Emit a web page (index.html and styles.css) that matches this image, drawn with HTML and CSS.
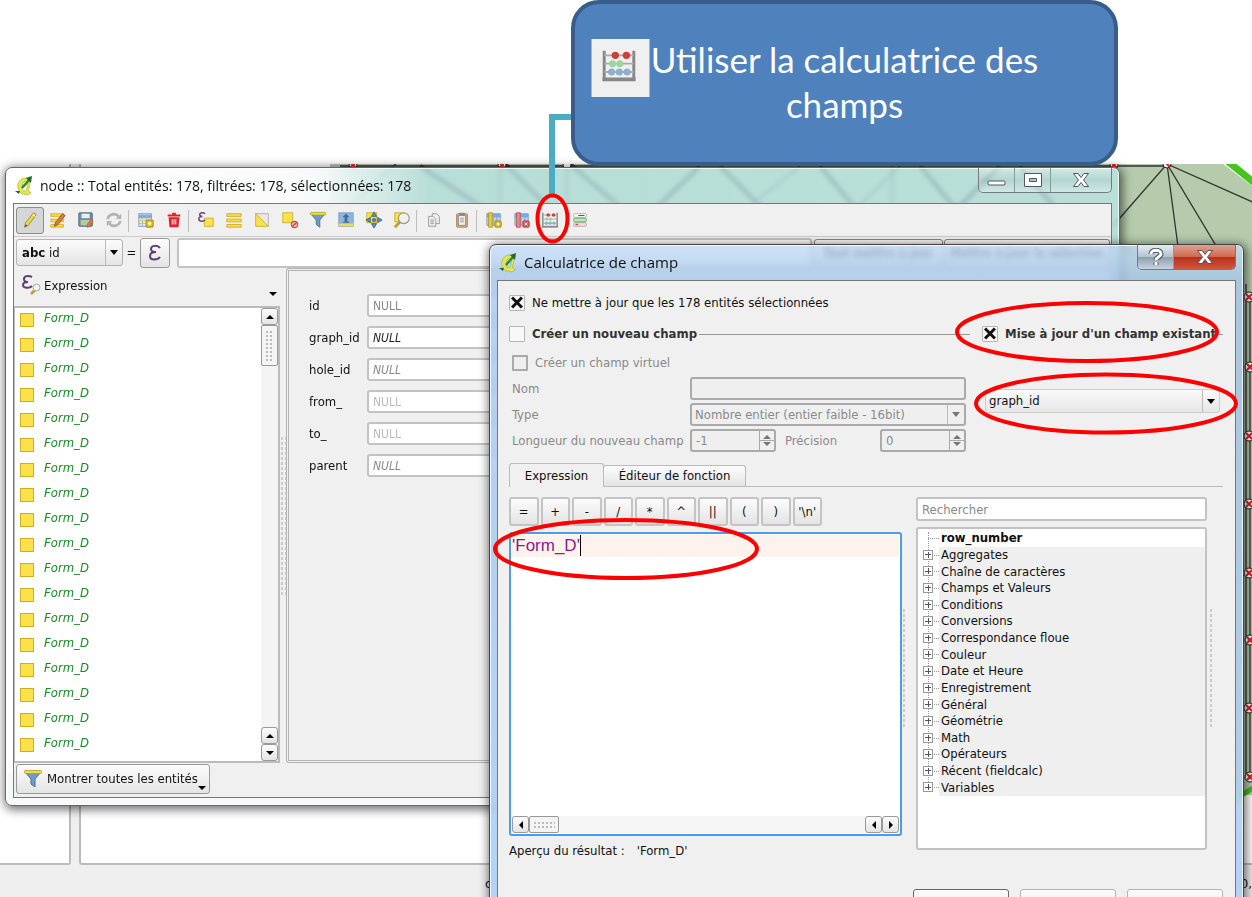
FILE: index.html
```html
<!DOCTYPE html>
<html lang="fr">
<head>
<meta charset="utf-8">
<title>Calculatrice de champ</title>
<link rel="stylesheet" href="styles.css">
</head>
<body>
<svg width="0" height="0" class="defs" aria-hidden="true">
  <defs>
    <symbol id="abacus" viewBox="0 0 20 20">
      <path d="M2 2v15M18 2v15" stroke="#888" stroke-width="1.6"/>
      <path d="M2 4.500h16M2 9h16M2 13.500h16" stroke="#aaa" stroke-width="1"/>
      <path d="M1 17.500h18" stroke="#888" stroke-width="2"/>
      <g fill="#d23c3c"><circle cx="8" cy="4.500" r="2"/><circle cx="14" cy="4.500" r="2"/></g>
      <g fill="#9bd69b"><circle cx="6.500" cy="9" r="1.900"/><circle cx="10.500" cy="9" r="1.900"/></g>
      <g fill="#8fb0cd"><circle cx="6" cy="13.500" r="1.900"/><circle cx="10.200" cy="13.500" r="1.900"/><circle cx="14.400" cy="13.500" r="1.900"/></g>
    </symbol>
    <symbol id="qgis" viewBox="0 0 20 20">
      <path d="M12 2C6 2 3 7 4 12c1 4 3 6 6 6l4 1 3-2-3-3c3-4 2-12-2-12zM11 5c3 0 3 6 1 9-2 2-4 1-4-2 0-3 1-6 3-7z" fill="#e2e852" stroke="#a9b52c" stroke-width=".7"/>
      <path d="M8 12 15 4" stroke="#2f8a35" stroke-width="2.500"/>
      <path d="M12 2l6-2-1 7zM1 15h5l-1 3z" fill="#1e6a28"/>
    </symbol>
    <symbol id="funnel" viewBox="0 0 20 20">
      <path d="M2 3h16l-6 7v8l-4-3v-5z" fill="#6f9bc8" stroke="#4d7096"/>
      <rect x="1.500" y="1.500" width="17" height="3" rx="1" fill="#f0dc3c" stroke="#a99a3a" stroke-width=".8"/>
    </symbol>
    <symbol id="table" viewBox="0 0 20 20">
      <rect x="2" y="3" width="14" height="14" fill="#e6eef6" stroke="#7f9fc0"/>
      <path d="M2 4h14v4H2z" fill="#7fa9d6"/><path d="M2 11h14M2 14h14M6 3v14M11 3v14" stroke="#9fb7d0"/>
    </symbol>
    <symbol id="columns" viewBox="0 0 20 20">
      <path d="M2 3h15v13H2z" fill="#b9d0ea" stroke="#7fa6d6"/><path d="M2 3h15v4H2z" fill="#7fa9dc"/>
      <path d="M9 7v9M13 7v9" stroke="#7fa6d6"/>
    </symbol>
  </defs>
</svg>

<main class="desktop">
  <svg class="map" aria-hidden="true">
    <rect x="330" width="922" height="631" fill="#b5cbab"/>
    <path d="M1218-4 1260 28V-4z" fill="#fff"/>
    <path d="M1226-4 1262 25" stroke="#46c41f" stroke-width="7"/>
    <path d="M1228 640 1256 622" stroke="#3cc01e" stroke-width="5"/>
    <path d="M1167 0 1112 63M1167 0l12 90M1167 0l60 100M1167 0l90 40M340 2h830M1112 75l24 16M330 60 400-4M420 2l90 60M500 2v60M505 0l50 50M567 0v50M570 0l70 60M700 2 650 50M720 2l60 60M800 2 740 50M820 2l50 60M900 2 850 50M892 0v50M920 2l50 60M1000 2l-50 50M1020 2l50 60M1246 120v490M1250 130v480" fill="none" stroke="#333" stroke-width="1.300"/>
    <path d="M420 2l90 60M505 0l50 50M570 0l70 60M700 2 650 50M720 2l60 60M820 2l50 60M920 2l50 60M1000 2l-50 50M1020 2l50 60" fill="none" stroke="#333" stroke-width="4"/>
    <g fill="#fff" stroke="#222"><circle cx="353" cy="1" r="4"/><circle cx="502" cy="1" r="4"/><circle cx="567" cy="1" r="4"/><circle cx="1114" cy="1" r="4"/><circle cx="1167" cy="0" r="4"/><circle cx="1249" cy="133" r="5"/><circle cx="1250" cy="203" r="5"/><circle cx="1249" cy="272" r="5"/><circle cx="1249" cy="340" r="5"/><circle cx="1249" cy="409" r="5"/><circle cx="1250" cy="476" r="5"/><circle cx="1249" cy="544" r="5"/><circle cx="1250" cy="613" r="5"/></g>
    <path d="M350-2l6 6m0-6-6 6M499-2l6 6m0-6-6 6M1111-2l6 6m0-6-6 6M1164-3l6 6M1246 130l6 6m0-6-6 6M1247 200l6 6m0-6-6 6M1246 269l6 6m0-6-6 6M1246 337l6 6m0-6-6 6M1246 406l6 6m0-6-6 6M1247 473l6 6m0-6-6 6M1246 541l6 6m0-6-6 6M1247 610l6 6m0-6-6 6" stroke="#e02020" stroke-width="2"/>
  </svg>
  <div class="back">
    <div class="back-panels"><div class="back-side"></div><div class="back-main"></div></div>
    <div class="status"><span>c</span><span>0,</span></div>
  </div>

  <section class="window node" aria-label="Table d'attributs">
    <header class="title">
      <svg class="i20"><use href="#qgis"/></svg>
      <h1>node :: Total entités: 178, filtrées: 178, sélectionnées: 178</h1>
      <div class="caption">
        <button aria-label="Réduire"><svg width="20" height="14"><rect x="1" y="8" width="17" height="4" rx="1" fill="#fff" stroke="#556"/></svg></button>
        <button aria-label="Agrandir"><svg width="20" height="16"><path d="M1.500 1.500h17v13h-17zM6.500 6.500v3h7v-3z" fill="#fff" fill-rule="evenodd" stroke="#556"/></svg></button>
        <button class="wide" aria-label="Fermer"><svg width="18" height="16"><path d="M1.500 1.500h4.500l3 4 3-4h4.500l-5 6.500 5 6.500h-4.500l-3-4-3 4h-4.500l5-6.500z" fill="#fff" stroke="#556"/></svg></button>
      </div>
    </header>
    <div class="client">
      <div class="toolbar">
        <button class="on" aria-label="Éditer"><svg viewBox="0 0 20 20"><path d="M4 18l1-5L14 2l3 2L8 16z" fill="#e7d94e" stroke="#93893c"/><path d="M13 4l3 2" stroke="#fff"/><path d="M4 18l1-3 2 1z" fill="#444"/></svg></button>
        <button aria-label="Multiédition"><svg viewBox="0 0 20 20"><path d="M2 3h14v3H2zM2 9h14v3H2zM2 15h14v3H2z" fill="#f7dc3d" stroke="#c9aa20" stroke-width=".8"/><path d="M6 17l1-4 8-10 3 2-8 10z" fill="#df7a3c" stroke="#8f532b"/></svg></button>
        <button aria-label="Enregistrer"><svg viewBox="0 0 20 20"><rect x="2" y="2" width="15" height="15" rx="1" fill="#6e8ba8" stroke="#536a80"/><path d="M5 3h9v5H5z" fill="#e8eef2"/><path d="M4 10h11v6H4z" fill="#b9c9a5"/><path d="M11 18l1-4 4-5 2 2-4 6z" fill="#e77838" stroke="#a65426" stroke-width=".7"/></svg></button>
        <button aria-label="Recharger"><svg viewBox="0 0 20 20" fill="none" stroke="#b3b3b3" stroke-width="3"><path d="M3 9c1-6 9-7 12-3M17 11c-1 6-9 7-12 3"/><path d="M18 3v6h-6zM2 17v-6h6z" fill="#b3b3b3" stroke="none"/></svg></button>
        <i></i>
        <button aria-label="Ajouter une entité"><svg viewBox="0 0 20 20"><use href="#table"/><path d="M2 9h14v2H2z" fill="#f5dd4c"/><rect x="10" y="10" width="8" height="8" rx="1" fill="#d9b82e" stroke="#a9891b"/><circle cx="14" cy="14" r="2" fill="#fff6c0"/></svg></button>
        <button aria-label="Supprimer"><svg viewBox="0 0 20 20"><path d="M4 7h12l-1 11H5zM3 4h14v2H3zM8 2h4v2H8z" fill="#e0202c"/><path d="M8 9v6M10 9v6M12 9v6" stroke="#fff" stroke-width="1"/></svg></button>
        <i></i>
        <button aria-label="Sélectionner par expression"><svg viewBox="0 0 20 20"><rect x="8" y="8" width="10" height="9" fill="#fbe14a" stroke="#cfae2a"/><path d="M9 3C6 1 3 2 3 4c0 1 1 2 3 2-3 0-4 1-4 3 0 3 5 3 7 1" fill="none" stroke="#6a4778" stroke-width="1.700"/></svg></button>
        <button aria-label="Tout sélectionner"><svg viewBox="0 0 20 20"><path d="M2 3h16v3H2zM2 9h16v3H2zM2 15h16v3H2z" fill="#f9df45" stroke="#d0ae28"/></svg></button>
        <button aria-label="Inverser la sélection"><svg viewBox="0 0 20 20"><path d="M3 3h14v14z" fill="#e9e9e9" stroke="#aaa"/><path d="M3 3v14h14z" fill="#fbe14a" stroke="#cfae2a"/></svg></button>
        <button aria-label="Désélectionner"><svg viewBox="0 0 20 20"><rect x="2" y="2" width="11" height="11" fill="#fbe14a" stroke="#cfae2a"/><circle cx="15" cy="15" r="3.500" fill="#f5b0b0" stroke="#d94646" stroke-width="1.200"/><path d="M12.500 17.500l5-5" stroke="#d94646" stroke-width="1.500"/></svg></button>
        <button aria-label="Filtrer"><svg><use href="#funnel"/></svg></button>
        <button aria-label="Déplacer en haut"><svg viewBox="0 0 20 20"><rect x="2" y="2" width="16" height="15" fill="#8db5dd" stroke="#7fa3c6"/><path d="M2 14h16v3H2z" fill="#f1dc55"/><path d="M10 3l4 4h-2.500v5h2v1h-7v-1h2V7H6z" fill="#416b97"/></svg></button>
        <button aria-label="Centrer la carte"><svg viewBox="0 0 20 20"><rect x="2" y="2" width="11" height="11" fill="#fbe14a" stroke="#cfae2a"/><path d="M10 1l3 5H7zM10 19l3-5H7zM1 10l5-3v6zM19 10l-5-3v6zM8.500 8.500h3v3h-3z" fill="#5f8cbb" stroke="#34587c" stroke-width=".8"/></svg></button>
        <button aria-label="Zoomer"><svg viewBox="0 0 20 20"><rect x="2" y="2" width="10" height="10" fill="#fbe14a" stroke="#cfae2a"/><path d="M8 12l-6 6" stroke="#c29a2d" stroke-width="3"/><circle cx="12" cy="8" r="6" fill="#f1f1ea" stroke="#989898" stroke-width="1.300"/></svg></button>
        <i></i>
        <button aria-label="Copier"><svg viewBox="0 0 20 20" fill="#eee" stroke="#999"><path d="M8 3h5l3 3v8H8z"/><path d="M4 6h5l3 3v8H4z"/><path d="M6 10h4M6 12h4M6 14h4"/></svg></button>
        <button aria-label="Coller"><svg viewBox="0 0 20 20"><rect x="4" y="3" width="12" height="15" rx="1" fill="#d4b07b" stroke="#a98552"/><path d="M6 5h8v11H6z" fill="#eee" stroke="#888"/><path d="M7 2h6v3H7z" fill="#888"/><path d="M8 8h4M8 10h4M8 12h4" stroke="#999"/></svg></button>
        <i></i>
        <button aria-label="Nouveau champ"><svg viewBox="0 0 20 20"><use href="#columns"/><rect x="4" y="2" width="4" height="16" fill="#e9c83a" stroke="#b99a22"/><rect x="11" y="11" width="7" height="7" rx="1" fill="#d9b82e" stroke="#a9891b"/><circle cx="14.500" cy="14.500" r="1.500" fill="#fff"/></svg></button>
        <button aria-label="Supprimer le champ"><svg viewBox="0 0 20 20"><use href="#columns"/><rect x="4" y="2" width="4" height="16" fill="#e58a8a" stroke="#c45353"/><rect x="11" y="11" width="7" height="7" rx="1" fill="#dc5a5a" stroke="#bb3d3d"/><path d="M13 13l3 3m0-3-3 3" stroke="#fff"/></svg></button>
        <button aria-label="Calculatrice de champ"><svg><use href="#abacus"/></svg></button>
        <button aria-label="Mise en forme"><svg viewBox="0 0 20 20"><g fill="#fff" stroke="#aaa"><rect x="3" y="3" width="14" height="4" rx="1"/><rect x="3" y="13" width="14" height="4" rx="1" fill="#fbdede"/></g><rect x="3" y="8" width="14" height="4" rx="1" fill="#bfe6bf" stroke="#5cab5c"/><path d="M8 5h7" stroke="#444"/><path d="M5 15h3" stroke="#e04040" stroke-width="1.500"/></svg></button>
      </div>
      <div class="editrow">
        <button class="combo"><b>abc</b>&nbsp;id<span class="drop"></span></button>
        <span>=</span>
        <button class="eps" aria-label="Expression"><svg width="16" height="18" viewBox="0 0 16 18"><path d="M13 4C11 1 4 1 4 5c0 2 2 3 5 3-4 0-6 1-6 4 0 5 8 4 10 1" fill="none" stroke="#5f3f73" stroke-width="2"/></svg></button>
        <input class="grow" aria-label="Valeur">
        <button class="push w1">Tout mettre à jour</button>
        <button class="push w2">Mettre à jour la sélection</button>
      </div>
      <div class="panes">
        <div class="listpane">
          <button class="exprhead"><svg width="22" height="22" viewBox="0 0 22 22"><path d="M11 3C7 1 3 2 3 5c0 2 1 3 4 3-3 0-5 1-5 3 0 3 6 4 9 1" fill="none" stroke="#5f3f73" stroke-width="2"/><path d="M14 16l-4 4" stroke="#c29a2d" stroke-width="2.500"/><circle cx="15.500" cy="13.500" r="3.500" fill="#f4f4f4" stroke="#aaa"/></svg><span>Expression</span><i class="tri"></i></button>
          <div class="listbox">
            <ul class="list">
              <li>Form_D</li><li>Form_D</li><li>Form_D</li><li>Form_D</li><li>Form_D</li><li>Form_D</li><li>Form_D</li><li>Form_D</li><li>Form_D</li><li>Form_D</li><li>Form_D</li><li>Form_D</li><li>Form_D</li><li>Form_D</li><li>Form_D</li><li>Form_D</li><li>Form_D</li><li>Form_D</li>
            </ul>
            <div class="vscroll"><button aria-label="Haut"><i class="tri up"></i></button><div class="thumb"></div><span></span><button aria-label="Monter"><i class="tri up"></i></button><button aria-label="Descendre"><i class="tri"></i></button></div>
          </div>
        </div>
        <div class="vsplit"></div>
        <form class="fields">
          <label for="f1">id</label><input id="f1" class="up" placeholder="NULL">
          <label for="f2">graph_id</label><input id="f2" class="strong" placeholder="NULL">
          <label for="f3">hole_id</label><input id="f3" placeholder="NULL">
          <label for="f4">from_</label><input id="f4" class="pale" placeholder="NULL">
          <label for="f5">to_</label><input id="f5" class="pale" placeholder="NULL">
          <label for="f6">parent</label><input id="f6" placeholder="NULL">
        </form>
      </div>
      <footer><button class="show"><svg class="i20"><use href="#funnel"/></svg>Montrer toutes les entités<i class="tri"></i></button></footer>
    </div>
  </section>

  <section class="window calc" aria-label="Calculatrice de champ">
    <header class="title">
      <svg class="i20"><use href="#qgis"/></svg>
      <h2>Calculatrice de champ</h2>
      <div class="caption">
        <button aria-label="Aide"><svg width="16" height="18"><path d="M3 6c0-5 10-5 10 0 0 3-5 3-5 6M8 14v3" fill="none" stroke="#4c5866" stroke-width="5"/><path d="M3 6c0-5 10-5 10 0 0 3-5 3-5 6M8 14v3" fill="none" stroke="#fff" stroke-width="3"/></svg></button>
        <button class="wide red" aria-label="Fermer"><svg width="18" height="16"><path d="M1.500 1.500h4.500l3 4 3-4h4.500l-5 6.500 5 6.500h-4.500l-3-4-3 4h-4.500l5-6.500z" fill="#fff" stroke="#556"/></svg></button>
      </div>
    </header>
    <div class="client">
      <label class="check only"><input type="checkbox" checked>Ne mettre à jour que les 178 entités sélectionnées</label>
      <div class="groups">
        <fieldset class="newfield">
          <div class="grouphead"><label class="check"><input type="checkbox"><b>Créer un nouveau champ</b></label><hr></div>
          <label class="check virtual"><input type="checkbox" disabled>Créer un champ virtuel</label>
          <div class="form">
            <label for="nom">Nom</label><input id="nom" class="span" disabled>
            <label for="type">Type</label>
            <span class="span pick"><select id="type" disabled><option>Nombre entier (entier faible - 16bit)</option></select><span class="drop"></span></span>
            <label for="len">Longueur du nouveau champ</label>
            <span class="spin"><input id="len" value="-1" disabled><span class="steps"><i class="tri up"></i><i class="tri"></i></span></span>
            <label for="prec">Précision</label>
            <span class="spin"><input id="prec" value="0" disabled><span class="steps"><i class="tri up"></i><i class="tri"></i></span></span>
          </div>
        </fieldset>
        <fieldset class="existing">
          <div class="grouphead"><label class="check"><input type="checkbox" checked><b>Mise à jour d'un champ existant</b></label><hr></div>
          <span class="pick live"><select aria-label="Champ existant"><option>graph_id</option></select><span class="drop"></span></span>
        </fieldset>
      </div>
      <div class="tabs"><button class="tab sel">Expression</button><button class="tab">Éditeur de fonction</button></div>
      <div class="work">
        <div class="left">
          <div class="ops"><button>=</button><button>+</button><button>-</button><button>/</button><button>*</button><button>^</button><button>||</button><button>(</button><button>)</button><button>'\n'</button></div>
          <div class="editor">
            <div class="line" contenteditable="true" role="textbox" aria-label="Expression">'Form_D'<span class="caret"></span></div>
            <div class="hscroll"><button aria-label="Gauche"><i class="tri lf"></i></button><div class="thumb"></div><span></span><button aria-label="Reculer"><i class="tri lf"></i></button><button aria-label="Avancer"><i class="tri rt"></i></button></div>
          </div>
          <p class="preview"><span>Aperçu du résultat :</span><span>'Form_D'</span></p>
        </div>
        <div class="vsplit"></div>
        <div class="right">
          <input class="search" aria-label="Rechercher" placeholder="Rechercher">
          <div class="treebox"><ul class="tree">
            <li class="leaf">row_number</li><li>Aggregates</li><li>Chaîne de caractères</li><li>Champs et Valeurs</li><li>Conditions</li><li>Conversions</li><li>Correspondance floue</li><li>Couleur</li><li>Date et Heure</li><li>Enregistrement</li><li>Général</li><li>Géométrie</li><li>Math</li><li>Opérateurs</li><li>Récent (fieldcalc)</li><li>Variables</li>
          </ul></div>
        </div>
        <div class="vsplit"></div>
      </div>
      <div class="actions"><button class="default" aria-label="OK"></button><button aria-label="Annuler"></button><button aria-label="Aide"></button></div>
    </div>
  </section>

  <aside class="callout"><svg class="picture" viewBox="0 0 58 58"><rect width="58" height="58" fill="#f0f0f0"/><use href="#abacus" x="9" y="8" width="37" height="37"/></svg><p>Utiliser la calculatrice des champs</p></aside>
  <svg class="marks" aria-hidden="true">
    <path d="M571 117H552V196" fill="none" stroke="#4bacc6" stroke-width="6"/>
    <g fill="none" stroke="#f00" stroke-width="4"><ellipse cx="552.500" cy="218.500" rx="15" ry="23"/><ellipse cx="1087" cy="332" rx="130" ry="29"/><ellipse cx="1106" cy="403.500" rx="130" ry="29"/><ellipse cx="626" cy="549" rx="131" ry="29"/></g>
  </svg>
</main>
</body>
</html>
```
FILE: styles.css
```css
*, *::before, *::after { box-sizing: border-box; }
body { margin: 0; background: #fff; color: #111; font: 13px/16px "DejaVu Sans Condensed", "Noto Sans", sans-serif; }
button, input, select { font: inherit; color: inherit; margin: 0; }
button { padding: 0; border: 1px solid #b4b4b4; border-radius: 3px; background: linear-gradient(#fcfcfc, #e4e4e4); }
input { min-width: 0; border: 2px solid #c3c3c3; border-radius: 3px; background: #fff; padding: 0 4px; }
ul { margin: 0; padding: 0; list-style: none; }
fieldset { margin: 0; padding: 0; border: 0; min-width: 0; }
.defs { position: absolute; }
.i20 { width: 20px; height: 20px; flex: none; }

.desktop { position: relative; min-height: 100vh; overflow: hidden; display: flex; flex-direction: column; padding-top: 164px; }
.map { position: absolute; z-index: 1; left: 0; top: 164px; width: 100%; height: 640px; }
.back { flex: 1; display: flex; flex-direction: column; background: #efefef; }
.back-panels { flex: 1; display: flex; gap: 8px; }
.back-side { width: 71px; background: #fff; border: solid #bbb; border-width: 0 2px 2px 0; border-radius: 0 0 3px 0; }
.back-main { flex: 1; background: #fff; border: solid #bbb; border-width: 0 0 2px 2px; border-radius: 0 0 0 3px; }
.status { height: 32px; display: flex; justify-content: space-between; padding: 11px 0 0 485px; }

.tri { display: inline-block; width: 0; height: 0; border: 4px solid transparent; border-top: 4px solid #000; border-bottom: 0; }
.tri.up { border-top: 0; border-bottom: 4px solid #000; }
.tri.lf { border: 4px solid transparent; border-right: 4px solid #000; border-left: 0; }
.tri.rt { border: 4px solid transparent; border-left: 4px solid #000; border-right: 0; }

.window { position: absolute; z-index: 2; display: flex; flex-direction: column; padding: 0 7px 7px; border: 1px solid #444; border-radius: 7px; box-shadow: inset 0 0 0 1px #fffc, 1px 2px 10px 2px #0008; }
.node { left: 5px; top: 167px; right: 132px; bottom: 91px; border-color: #666; background: linear-gradient(transparent 95%, #f6f9f9 95%), linear-gradient(90deg, #fff 0, #f9fbfb 27%, #b9e2e2d0 38%, #b9e4e4c8 100%); backdrop-filter: blur(2px); }
.calc { left: 489px; top: 244px; right: 8px; bottom: -24px; background: linear-gradient(#c0daf4c8 0, #a4c6eac8 36px, #afd2f5f0 100%); backdrop-filter: blur(3px); }
.title { display: flex; align-items: flex-start; gap: 6px; height: 35px; padding: 8px 0 0 1px; flex: none; }
.title h1, .title h2 { margin: 0; flex: 1; font: 14px/20px "Open Sans", "Noto Sans", sans-serif; color: #111; }
.title h2 { font-size: 15px; line-height: 18px; }
.caption { display: flex; margin-top: -8px; border: 1px solid #778; border-top: 0; border-radius: 0 0 5px 5px; overflow: hidden; }
.caption button { width: 36px; height: 24px; display: grid; place-items: center; border: 0; border-right: 1px solid #8899a0; border-radius: 0; background: linear-gradient(#ffffff60, #9aaab030 50%, #ffffff50); }
.caption .wide { width: 60px; border: 0; }
.caption .red { background: linear-gradient(#e0a08e, #cf6a52 48%, #b8321a 52%, #d0563c); }
.calc .caption .wide { width: 61px; }
.calc .caption button:first-child { background: linear-gradient(#e4ecf2, #b4c2ce 50%, #8fa0b0 52%, #c4d4e0); }
.client { flex: 1; min-height: 0; display: flex; flex-direction: column; border: 1px solid #777; background: #f0f0f0; }

.toolbar { display: flex; align-items: center; height: 33px; padding-left: 2px; border-bottom: 1px solid #ccc; flex: none; }
.toolbar button { width: 28px; height: 27px; display: grid; place-items: center; background: none; border: 0; }
.toolbar .on { border: 1px solid #8c8c8c; background: #d6d6d6; }
.toolbar svg { width: 18px; height: 18px; }
.toolbar i { width: 4px; height: 22px; border-left: 1px solid #bdbdbd; margin-top: 1px; }
.toolbar button:last-child { margin-left: 2px; }
.editrow { display: flex; align-items: center; height: 31px; padding-left: 2px; flex: none; }
.combo { position: relative; width: 107px; height: 27px; padding-left: 5px; text-align: left; }
.drop { position: absolute; right: 0; top: 0; bottom: 0; width: 17px; border-left: 1px solid #bbb; display: grid; place-items: center; }
.drop::after { content: ""; width: 8px; border: 4px solid transparent; border-top: 5px solid #000; border-bottom: 0; }
.editrow > span { width: 17px; text-align: center; }
.eps { width: 30px; height: 30px; display: grid; place-items: center; border-color: #999; }
.grow { flex: 1; height: 30px; margin: 0 2px 0 7px; }
.push { height: 28px; font-size: 12px; font-weight: bold; margin-right: 1px; border-color: #888; }
.w1 { width: 129px; }
.w2 { width: 166px; }
.panes { flex: 1; min-height: 0; display: flex; }
.listpane { width: 266px; display: flex; flex-direction: column; }
.exprhead { display: flex; align-items: flex-start; gap: 1px; height: 38px; padding: 6px 3px 0 7px; border: 0; background: none; flex: none; }
.exprhead span { flex: 1; text-align: left; margin-top: 4px; }
.exprhead .tri { margin-top: 18px; }
.listbox { flex: 1; display: flex; min-height: 0; border: 2px solid #bbb; border-left: 1px solid #bbb; background: #fff; }
.list { flex: 1; }
.list li { display: flex; align-items: flex-start; gap: 10px; height: 25px; padding: 2px 0 0 5px; color: #1c8a28; font-style: italic; }
.list li::before { content: ""; width: 14px; height: 14px; border: 1px solid #cfae22; background: #fbe14a; margin-top: 3px; }
.vscroll { width: 17px; display: flex; flex-direction: column; background: #f4f4f4; }
.vscroll span, .hscroll span { flex: 1; }
.vscroll button { height: 17px; display: grid; place-items: center; border-color: #999; }
.thumb { border: 1px solid #999; border-radius: 2px; background: radial-gradient(#bbb 1px, transparent 1px) 3px 4px / 4px 4px, #f4f4f4; background-clip: content-box, border-box; padding: 3px; }
.vscroll .thumb { height: 41px; }
.vsplit { width: 6px; flex: none; align-self: center; height: 160px; background: radial-gradient(#ccc 1px, transparent 1px) 0 0 / 4px 5px; }
.fields { flex: 1; display: grid; grid-template-columns: 58px 1fr; grid-auto-rows: 23px; gap: 9px 0; align-content: start; align-items: center; padding: 23px 8px 0 20px; border: 3px double #b4b4b4; border-right: 0; border-radius: 3px; }
.fields label { white-space: nowrap; }
.fields input { height: 23px; font-size: 12px; font-style: italic; }
.fields input::placeholder { color: #888; opacity: 1; }
.fields .up { font-style: normal; }
.fields .strong::placeholder { color: #222; }
.fields .pale { font-style: normal; }
.fields .pale::placeholder { color: #bbb; }
.node footer { height: 34px; padding: 1px 2px; flex: none; }
.show { position: relative; display: flex; align-items: center; gap: 4px; height: 30px; padding: 0 11px 0 6px; border-color: #999; }
.show .tri { position: absolute; right: 3px; bottom: 3px; }

.calc .client { padding: 0 12px 0 11px; }
.check { display: flex; align-items: center; gap: 7px; white-space: nowrap; }
.check input { position: relative; appearance: none; width: 16px; height: 16px; padding: 0; border: 1px solid #b6b6b6; border-radius: 1px; flex: none; background: #f8f8f8; }
.check input:checked::before, .check input:checked::after { content: ""; position: absolute; left: 0; top: 5px; width: 14px; height: 3px; background: #111; transform: rotate(45deg); }
.check input:checked::after { transform: rotate(-45deg); }
.only { padding-top: 14px; height: 30px; }
.groups { display: grid; grid-template-columns: minmax(0, 461fr) minmax(0, 241fr); gap: 12px; padding-top: 14px; }
.grouphead { display: flex; align-items: center; height: 18px; color: #333; }
.grouphead hr { flex: 1; min-width: 4px; margin: 0 0 0 2px; border: 0; border-top: 1px solid #999; }
.virtual { margin-top: 11px; padding-left: 3px; height: 17px; }
.newfield > .virtual, .form { color: #8a8a8a; }
.virtual input { background: #eee; border: 2px solid #aaa; }
.form { display: grid; grid-template-columns: 178px 86px 1fr 86px; gap: 3px 0; align-items: center; margin: 6px 4px 0 3px; grid-auto-rows: 23px; }
.form .span { grid-column: 2 / 5; height: 23px; }
.form input, .form .pick, .form select { background: #efefef; border-color: #aaa; color: #8a8a8a; }
.form label[for="prec"] { padding-left: 9px; }
.pick { position: relative; display: flex; border: 2px solid #aaa; border-radius: 3px; }
.pick select { appearance: none; flex: 1; width: 100%; border: 0; padding: 0 3px; background: none; opacity: 1; }
.form .drop::after { border-top-color: #777; }
.spin { display: flex; height: 23px; }
.spin input { flex: 1; width: 60px; border-radius: 3px 0 0 3px; border-right: 0; }
.steps { width: 17px; border: 2px solid #aaa; border-left-width: 1px; border-radius: 0 3px 3px 0; display: flex; flex-direction: column; align-items: center; justify-content: space-evenly; background: linear-gradient(transparent 9px, #aaa 9px, #aaa 10px, transparent 10px); }
.steps .tri { border-top-color: #777; }
.steps .up { border-bottom-color: #777; }
.live { margin: 46px 3px 0 3px; height: 24px; border: 1px solid #ccc; background: linear-gradient(#fafafa, #e6e6e6); }
.tabs { display: flex; align-items: flex-end; margin-top: 11px; height: 24px; border-bottom: 1px solid #bbb; flex: none; }
.tab { height: 21px; width: 143px; border: 1px solid #bbb; border-bottom: 0; border-radius: 3px 3px 0 0; margin-left: -1px; }
.tab.sel { height: 24px; width: 95px; margin: 0 0 -1px; background: #f0f0f0; }
.work { display: flex; flex: none; padding-top: 10px; }
.left { flex: 393; min-width: 0; }
.ops { display: grid; grid-template-columns: repeat(10, 1fr); gap: 2px; width: 313px; }
.ops button { height: 29px; border: 2px solid #c4c4c4; }
.editor { display: flex; flex-direction: column; justify-content: space-between; height: 304px; margin-top: 6px; padding: 1px; border: 2px solid #4a9cf0; border-radius: 3px; background: #fff; }
.line { height: 22px; background: #fdf3ec; color: #8e1a8e; font: 17px/22px "Liberation Sans", Arial, sans-serif; outline: 0; }
.caret { display: inline-block; width: 1px; height: 21px; background: #000; vertical-align: top; }
.hscroll { display: flex; height: 17px; background: #f6f6f6; }
.hscroll button { width: 17px; display: grid; place-items: center; border-color: #999; }
.hscroll .thumb { width: 30px; }
.preview { display: flex; gap: 12px; margin: 7px 0 0; }
.right { flex: 291; min-width: 0; margin-left: 9px; display: flex; flex-direction: column; }
.search { height: 24px; flex: none; }
.search::placeholder { color: #8a8a8a; opacity: 1; }
.treebox { height: 323px; margin-top: 6px; border: 2px solid #c3c3c3; border-radius: 3px; background: #fff; padding-top: 1px; }
.tree { position: relative; display: grid; grid-auto-rows: 1fr; height: 266px; padding-left: 21px; }
.tree::before { content: ""; position: absolute; left: 10px; top: 2px; bottom: 8px; border-left: 1px dotted #999; }
.tree li { position: relative; display: flex; align-items: center; background: #efefef; padding-left: 2px; white-space: nowrap; }
.tree .leaf { background: none; font-weight: bold; }
.tree li::after { content: ""; position: absolute; left: -11px; top: 8px; width: 11px; border-top: 1px dotted #999; }
.tree li:not(.leaf)::before { content: ""; position: absolute; z-index: 1; left: -16px; top: 3px; width: 10px; height: 10px; border: 1px solid #999; background: linear-gradient(#555, #555) center / 6px 1px no-repeat, linear-gradient(#555, #555) center / 1px 6px no-repeat, #fff; }
.work > .vsplit { height: 120px; margin-top: -20px; width: 5px; }
.work > .right + .vsplit { margin: -20px 9px 0 2px; }
.actions { display: flex; justify-content: flex-end; gap: 11px; padding-top: 30px; }
.actions button { width: 96px; height: 28px; }
.actions .default { border-color: #666; }

.callout { position: absolute; z-index: 4; left: 571px; top: 0; right: 134px; height: 166px; display: flex; justify-content: center; padding: 33px 60px 0; border: 4px solid #385d8a; border-radius: 28px; background: #4f81bd; color: #fff; }
.callout p { margin: 0; width: 100%; text-align: center; font: 35px/45px Lato, sans-serif; }
.picture { position: absolute; left: 16px; top: 35px; width: 59px; height: 58px; }
.marks { position: absolute; z-index: 5; left: 0; top: 0; width: 100%; height: 100%; pointer-events: none; }
```
